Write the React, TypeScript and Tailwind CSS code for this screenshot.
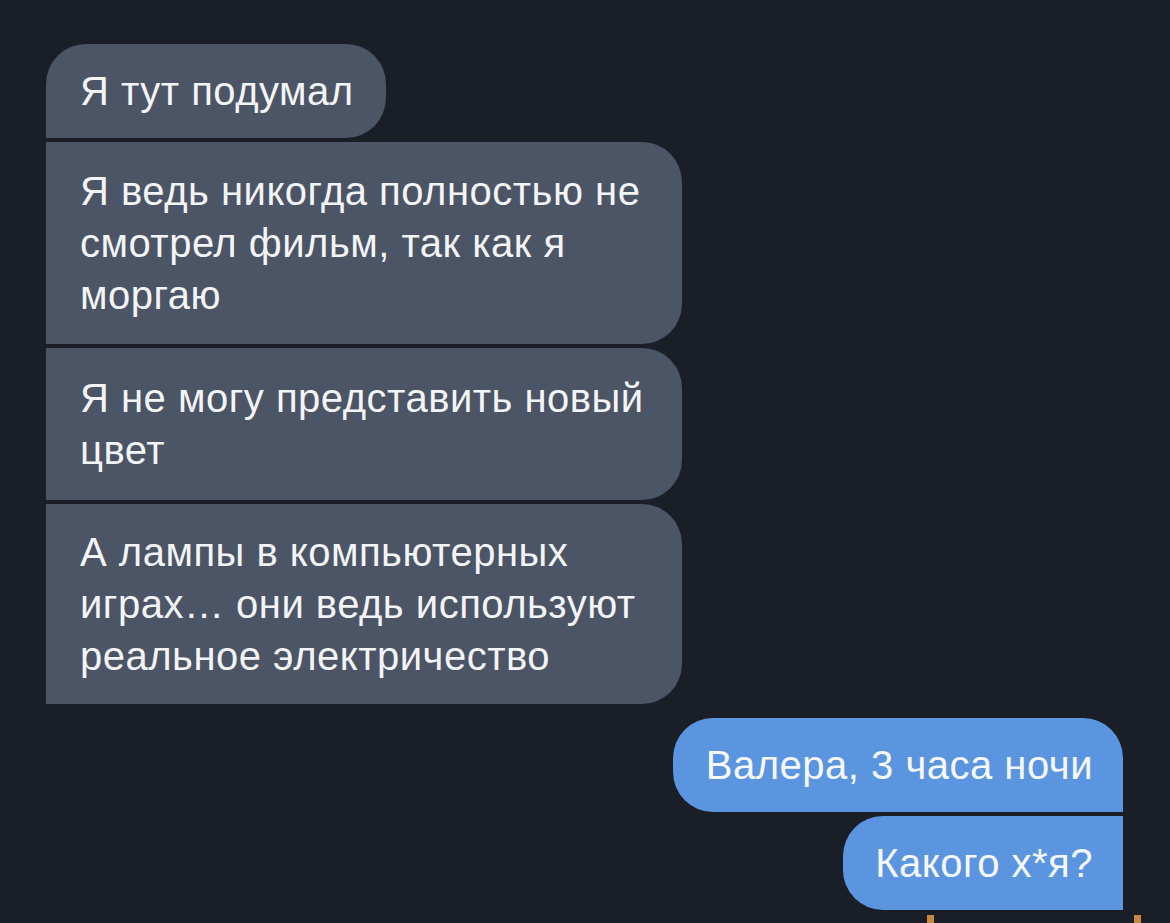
import React from "react";

const grey = "bg-[#4b5565] text-[#f3f4f6]";
const blue = "bg-[#5c95df] text-[#f5f8fc]";

function App() {
  return (
    <div
      className="w-[1170px] h-[923px] overflow-hidden bg-[#1a1e27] pt-[44px] pl-[46px] pr-[47px] text-[40px] leading-[52px] tracking-[0.5px]"
      style={{ fontFamily: '"Liberation Sans", Arial, sans-serif' }}
    >
      <div className="flex flex-col items-start gap-[4px]">
        <div className={`${grey} rounded-tl-[40px] rounded-r-[40px] pl-[34px] pr-[32px] py-[21px]`}>
          Я тут подумал
        </div>
        <div className={`${grey} w-[636px] rounded-r-[40px] pl-[34px] pr-[30px] py-[23px]`}>
          Я ведь никогда полностью не смотрел фильм, так как я моргаю
        </div>
        <div className={`${grey} w-[636px] rounded-r-[40px] pl-[34px] pr-[30px] py-[24px]`}>
          Я не могу представить новый цвет
        </div>
        <div className={`${grey} w-[636px] rounded-r-[40px] pl-[34px] pr-[30px] py-[22px]`}>
          А лампы в компьютерных играх… они ведь используют реальное электричество
        </div>
      </div>

      <div className="mt-[14px] flex flex-col items-end gap-[4px]">
        <div className={`${blue} rounded-t-[40px] rounded-bl-[40px] pl-[33px] pr-[30px] py-[21px]`}>
          Валера, 3 часа ночи
        </div>
        <div className={`${blue} rounded-l-[40px] pl-[32px] pr-[30px] py-[21px]`}>
          Какого х*я?
        </div>
      </div>

      {/* orange corner marks peeking in at the bottom */}
      <div className="mt-[5px] flex justify-end gap-[200px]">
        <span className="block h-[8px] w-[7px] bg-[#c98840]" />
        <span className="mr-[-18px] block h-[8px] w-[7px] bg-[#c98840]" />
      </div>
    </div>
  );
}

export default App;
